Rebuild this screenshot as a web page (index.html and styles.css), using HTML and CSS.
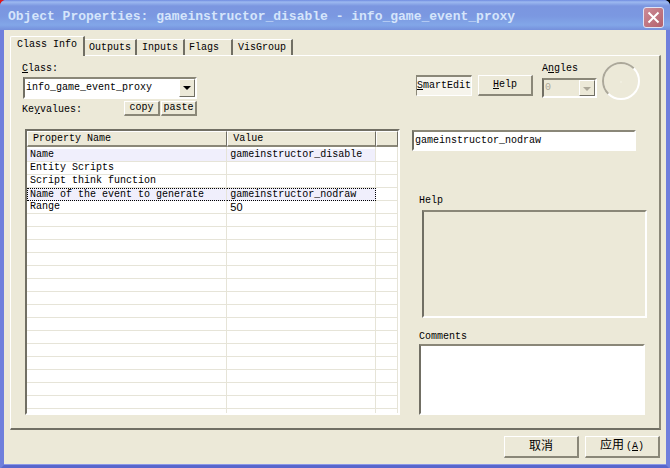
FILE: index.html
```
<!DOCTYPE html>
<html lang="en">
<head>
  <meta charset="UTF-8">
  <meta name="viewport" content="width=device-width, initial-scale=1">
  <title>Object Properties</title>
  <link rel="stylesheet" href="styles.css">
</head>
<body>

<div class="window">
  <header class="titlebar">
    <h1>Object Properties: gameinstructor_disable - info_game_event_proxy</h1>
    <button class="close" type="button" aria-label="Close">
      <svg width="13" height="13" viewBox="0 0 13 13"><path d="M1.500 1.500L11.500 11.500M11.500 1.500L1.500 11.500" stroke="#fff" stroke-width="2"/></svg>
    </button>
  </header>

  <div class="tabs">
    <button class="tab active" type="button">Class Info</button>
    <button class="tab" type="button">Outputs</button>
    <button class="tab" type="button">Inputs</button>
    <button class="tab tab-flags" type="button">Flags</button>
    <button class="tab" type="button">VisGroup</button>
  </div>

  <main class="panel">
    <section class="left">
      <label for="class"><u>C</u>lass:</label>
      <div class="combo class-combo">
        <select id="class"><option>info_game_event_proxy</option></select>
        <span class="arrow"></span>
      </div>
      <div class="keyvalues">
        <span>Ke<u>y</u>values:</span>
        <div class="clip">
          <button class="btn small" type="button">copy</button>
          <button class="btn small" type="button">paste</button>
        </div>
      </div>

      <div class="list">
        <table>
          <colgroup><col class="col-name"><col class="col-value"><col></colgroup>
          <thead>
            <tr><th>Property Name</th><th>Value</th><th></th></tr>
          </thead>
          <tbody>
            <tr class="spacer"><td></td><td></td><td></td></tr>
            <tr class="marked"><td>Name</td><td>gameinstructor_disable</td><td></td></tr>
            <tr><td>Entity Scripts</td><td></td><td></td></tr>
            <tr><td>Script think function</td><td></td><td></td></tr>
            <tr class="marked focus"><td>Name of the event to generate</td><td>gameinstructor_nodraw</td><td></td></tr>
            <tr><td>Range</td><td class="number">50</td><td></td></tr>
            <tr><td></td><td></td><td></td></tr>
            <tr><td></td><td></td><td></td></tr>
            <tr><td></td><td></td><td></td></tr>
            <tr><td></td><td></td><td></td></tr>
            <tr><td></td><td></td><td></td></tr>
            <tr><td></td><td></td><td></td></tr>
            <tr><td></td><td></td><td></td></tr>
            <tr><td></td><td></td><td></td></tr>
            <tr><td></td><td></td><td></td></tr>
            <tr><td></td><td></td><td></td></tr>
            <tr><td></td><td></td><td></td></tr>
            <tr><td></td><td></td><td></td></tr>
            <tr><td></td><td></td><td></td></tr>
            <tr><td></td><td></td><td></td></tr>
            <tr><td></td><td></td><td></td></tr>
            <tr class="last"><td></td><td></td><td></td></tr>
          </tbody>
        </table>
      </div>
    </section>

    <section class="right">
      <div class="tools">
        <button class="btn pressed" type="button"><u>S</u>martEdit</button>
        <button class="btn help-btn" type="button"><u>H</u>elp</button>
        <div class="angles">
          <label for="angles">A<u>n</u>gles</label>
          <div class="combo disabled">
            <select id="angles" disabled><option>0</option></select>
            <span class="arrow"></span>
          </div>
        </div>
        <svg class="dial" width="38" height="38" viewBox="0 0 38 38" fill="none" stroke-width="2">
          <circle cx="19" cy="19" r="18" stroke="#fff"/>
          <circle cx="19" cy="19" r="18" stroke="#aca899" pathLength="360" stroke-dasharray="180 180" transform="rotate(135 19 19)"/>
          <path d="M18 20h2" stroke="#f6f4e8" stroke-width="1"/>
        </svg>
      </div>
      <input class="value" type="text" value="gameinstructor_nodraw" aria-label="Value">
      <label for="help">Help</label>
      <textarea class="help" id="help" readonly></textarea>
      <label for="comments">Comments</label>
      <textarea class="comments" id="comments"></textarea>
    </section>
  </main>

  <footer class="actions">
    <button class="btn" type="button">取消</button>
    <button class="btn" type="button">应用<span class="key">(<u>A</u>)</span></button>
  </footer>
</div>

</body>
</html>
```
FILE: styles.css
```
* {
  box-sizing: border-box;
}
body {
  margin: 0;
  background: linear-gradient(90deg, #e01818 10px, #000 10px);
  color: #000;
}
body, button, input, select, textarea {
  font-family: "Liberation Mono", "Noto Sans CJK SC", monospace;
  font-size: 10px;
  line-height: 12px;
}
button, input, select, textarea {
  margin: 0;
  border-radius: 0;
  color: #000;
}
label {
  display: block;
}

.window {
  display: flex;
  flex-direction: column;
  min-height: 100vh;
  background: #ece9d8;
  border: solid #6f7fdc;
  border-width: 0 4px 4px;
  border-bottom-color: #5866cc;
  border-radius: 6px 6px 0 0;
  box-shadow: inset 0 -1px #8a98e6;
}
.titlebar {
  display: flex;
  align-items: center;
  justify-content: space-between;
  height: 30px;
  margin: 0 -4px;
  padding: 4px 6px 0 8px;
  border-radius: 6px 6px 0 0;
  background: linear-gradient(#6f8be0, #9db9f0 2px, #7b96e0 6px, #7b98e1 16px, #82a6e8 25px, #7590dc);
}
.titlebar h1 {
  margin: 0;
  font-size: 13px;
  line-height: 16px;
  color: #d5e5fb;
  white-space: nowrap;
}
.close {
  display: flex;
  align-items: center;
  justify-content: center;
  width: 21px;
  height: 21px;
  padding: 0;
  border: 1px solid #dfe3f5;
  border-radius: 3px;
  background: linear-gradient(135deg, #cc8c98, #b4616c);
}

/* tabs */
.tabs {
  display: flex;
  align-items: flex-end;
  height: 25px;
  padding-left: 6px;
}
.tab {
  height: 16px;
  padding: 1px 4px 0;
  border: solid;
  border-width: 1px 2px 0 0;
  border-color: #fff #716f64 #fff #fff;
  background: none;
}
.tab:nth-child(3),
.tab:last-child {
  padding: 1px 5px 0;
}
.tab.active {
  position: relative;
  height: 20px;
  padding: 0 6px 3px;
  margin-bottom: -1px;
  border-left-width: 1px;
  border-radius: 2px 0 0 0;
  background: #ece9d8;
}
.tab.tab-flags {
  padding-right: 12px;
}

/* page */
.panel {
  flex: 1;
  display: flex;
  gap: 12px;
  margin: 0 5px 0 6px;
  padding: 7px 9px 13px 14px;
  border: solid;
  border-width: 1px 2px 2px 1px;
  border-color: #fff #8a8778 #716f64 #fff;
}
.left {
  flex: 375;
  display: flex;
  flex-direction: column;
  min-width: 0;
}
.right {
  flex: 238;
  display: flex;
  flex-direction: column;
  min-width: 0;
}
.left > label,
.keyvalues span {
  margin-left: -3px;
}

.combo {
  position: relative;
  height: 20px;
  border: 2px solid;
  border-color: #8a8778 #fff #fff #716f64;
  background: #fff;
}
.combo select {
  display: block;
  appearance: none;
  width: 100%;
  height: 100%;
  padding: 0 1px;
  border: 0;
  background: none;
}
.class-combo {
  width: 174px;
  height: 22px;
  margin: 2px 0 2px -2px;
}
.arrow {
  position: absolute;
  top: 0;
  right: 0;
  bottom: 0;
  width: 16px;
  border: 1px solid;
  border-color: #fff #716f64 #716f64 #fff;
  background: #ece9d8;
  pointer-events: none;
}
.arrow::after {
  content: "";
  position: absolute;
  top: 6px;
  left: 3px;
  border: 4px solid transparent;
  border-top-color: currentColor;
  border-bottom: 0;
}
.disabled {
  color: #aca899;
  background: #ece9d8;
}
.disabled select {
  color: #aca899;
  opacity: 1;
}

.keyvalues {
  display: flex;
  justify-content: space-between;
  align-items: center;
  width: 172px;
  margin-bottom: 13px;
}
.keyvalues span {
  padding-top: 3px;
}
.clip {
  display: flex;
  gap: 1px;
}

.btn {
  height: 21px;
  padding: 0 2px;
  border: solid;
  border-width: 1px 2px 2px 1px;
  border-color: #fff #8a8778 #8a8778 #fff;
  background: #ece9d8;
}
.btn.small {
  width: 36px;
  height: 15px;
  padding: 0;
  line-height: 12px;
}
.btn.pressed {
  width: 56px;
  padding: 0;
  border-width: 2px 1px 1px 1px;
  border-color: #8a8778 #fff #fff #8a8778;
  background: #f6f4ec;
}

/* property list */
.list {
  flex: 1;
  border: 2px solid;
  border-color: #716f64 #fff #fff #716f64;
  background: #fff;
}
table {
  width: 100%;
  table-layout: fixed;
  border-collapse: separate;
  border-spacing: 0;
}
.col-name {
  width: 54%;
}
.col-value {
  width: 40%;
}
th {
  height: 16px;
  padding: 1px 5px 0;
  border: solid;
  border-width: 1px 1px 2px 1px;
  border-color: #fff #716f64 #8a8778 #fff;
  background: #ece9d8;
  font-weight: normal;
  text-align: left;
}
td {
  height: 13px;
  padding: 0 3px;
  border: solid #e6e4d8;
  border-width: 0 1px 1px 0;
  white-space: nowrap;
}
.spacer td {
  height: 2px;
  border-bottom: 0;
}
.last td {
  height: 4px;
  border-bottom: 0;
}
.marked td:not(:last-child) {
  background: #f0effc;
}
.focus td:not(:last-child) {
  border-top: 1px dotted #000;
  border-bottom: 1px dotted #000;
  line-height: 11px;
}
.focus td:first-child {
  padding-left: 2px;
  border-left: 1px dotted #000;
}
.focus td:nth-child(2) {
  border-right: 1px dotted #000;
}
.number {
  font-family: "Liberation Sans", sans-serif;
  font-size: 11px;
}

/* right side */
.tools {
  display: flex;
  align-items: flex-start;
  margin-left: 4px;
}
.tools .btn {
  margin-top: 12px;
}
.help-btn {
  width: 55px;
  margin-left: 6px;
}
.angles {
  width: 55px;
  margin: 0 5px 0 9px;
}
.angles .combo {
  margin-top: 3px;
}
.dial {
  margin-top: -1px;
}
.value {
  width: 94%;
  height: 21px;
  margin: 30px 0 44px;
  padding: 0 1px;
  border: 2px solid;
  border-color: #8a8778 #fff #fff #716f64;
}
.right > label {
  margin-left: 7px;
}
textarea {
  display: block;
  resize: none;
  border: 2px solid;
  border-color: #8a8778 #fff #fff #716f64;
}
.help {
  flex: 112;
  margin: 3px 3px 13px 10px;
  background: #ece9d8;
}
.comments {
  flex: 70;
  margin: 1px 5px 0 7px;
}

.actions {
  display: flex;
  justify-content: flex-end;
  gap: 6px;
  padding: 6px 6px 7px;
}
.actions .btn {
  width: 75px;
  height: 22px;
  font-size: 12px;
}
.key {
  margin-left: 2px;
  font-size: 10px;
}
```
